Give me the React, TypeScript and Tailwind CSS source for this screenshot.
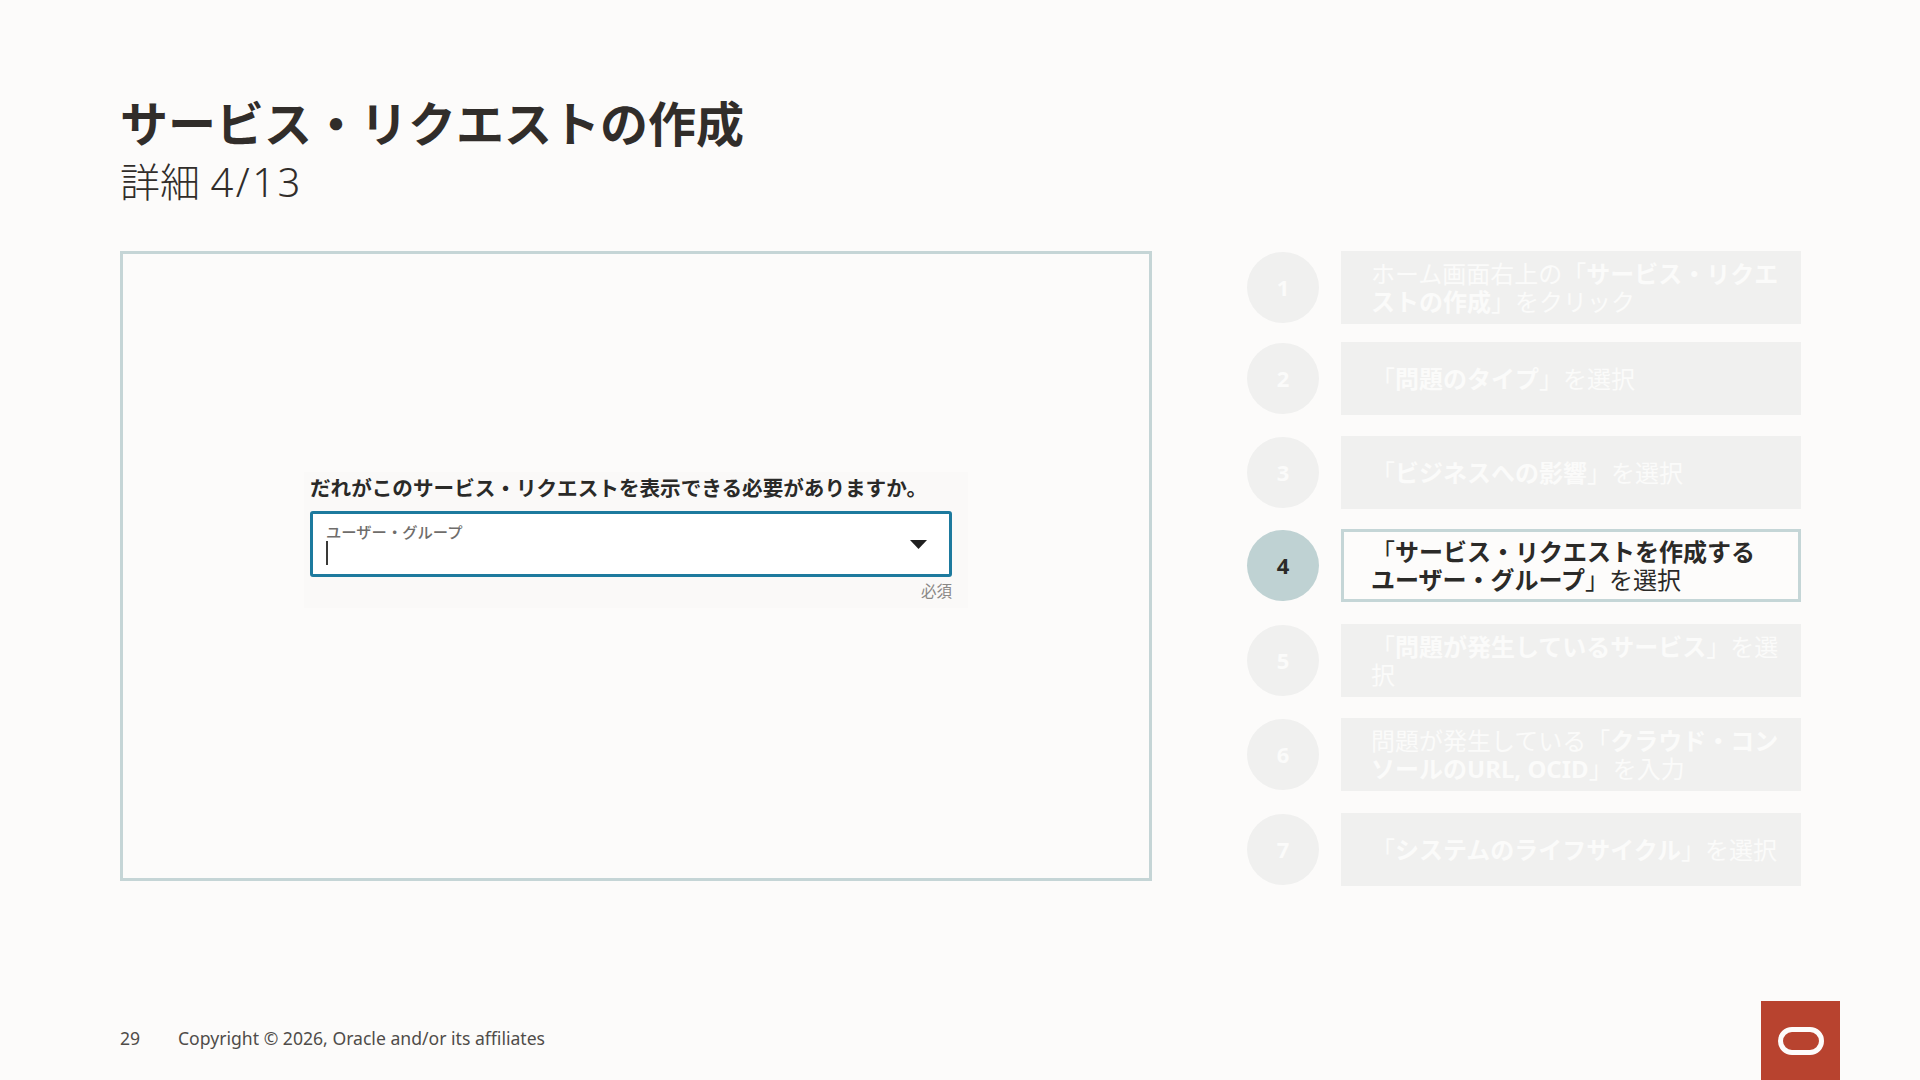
import React from "react";

type Step = { n: number; mt: string; lines: React.ReactNode[] };

const B = ({ children }: { children: React.ReactNode }) => <span className="font-bold">{children}</span>;

const steps: Step[] = [
  { n: 1, mt: "mt-0", lines: [<>ホーム画面右上の「<B>サービス・リクエ</B></>, <><B>ストの作成</B>」をクリック</>] },
  { n: 2, mt: "mt-[18px]", lines: [<>「<B>問題のタイプ</B>」を選択</>] },
  { n: 3, mt: "mt-[21px]", lines: [<>「<B>ビジネスへの影響</B>」を選択</>] },
  { n: 4, mt: "mt-[20px]", lines: [<>「<B>サービス・リクエストを作成する</B></>, <><B>ユーザー・グループ</B>」を選択</>] },
  { n: 5, mt: "mt-[22px]", lines: [<>「<B>問題が発生しているサービス</B>」を選</>, <>択</>] },
  { n: 6, mt: "mt-[21px]", lines: [<>問題が発生している「<B>クラウド・コン</B></>, <><B>ソールのURL, OCID</B>」を入力</>] },
  { n: 7, mt: "mt-[22px]", lines: [<>「<B>システムのライフサイクル</B>」を選択</>] },
];

function StepRow({ n, mt, lines }: Step) {
  const active = n === 4;
  return (
    <div className={`flex items-center gap-[22px] h-[73px] ${mt}`}>
      <div
        className={
          active
            ? "w-[72px] h-[71px] rounded-full bg-[#bfd2d3] flex items-center justify-center text-[22px] font-bold text-[#2b2a28]"
            : "w-[72px] h-[71px] rounded-full bg-[#f0f0ef] flex items-center justify-center text-[22px] font-bold text-[#fbfbfa]"
        }
      >
        {n}
      </div>
      <div
        className={
          active
            ? "w-[460px] h-[73px] border-[3px] border-[#c5d6d7] bg-[#fdfcfb] pl-[27px] flex flex-col justify-center text-[24px] leading-[28px] whitespace-nowrap text-[#2b2a28]"
            : "w-[460px] h-[73px] bg-[#f0f0ef] pl-[30px] flex flex-col justify-center text-[24px] leading-[28px] whitespace-nowrap text-[#fbfbfa]"
        }
      >
        {lines.map((l, i) => (
          <div key={i}>{l}</div>
        ))}
      </div>
    </div>
  );
}

export default function App() {
  return (
    <div className="w-[1920px] h-[1080px] overflow-hidden bg-[#fcfbfa] flex flex-col text-[#312d2a] font-['Noto_Sans','Noto_Sans_CJK_JP',sans-serif]">
      <div className="pl-[120px] pt-[92px] h-[251px] shrink-0">
        <h1 className="text-[48px] leading-[64px] font-bold">サービス・リクエストの作成</h1>
        <div className="text-[40px] leading-[52px] font-light">
          詳細 <span className="tracking-[2.5px]">4/13</span>
        </div>
      </div>

      <div className="pl-[120px] flex gap-[95px]">
        <div className="w-[1032px] h-[630px] border-[3px] border-[#c5d5d6] flex items-start justify-center">
          <div className="mt-[218px] w-[664px] h-[136px] bg-[#faf9f8] pl-[6px] pr-[16px] font-['Noto_Sans_CJK_JP',sans-serif]">
            <div className="text-[20.6px] leading-[30px] font-bold text-[#2a2a28] whitespace-nowrap">
              だれがこのサービス・リクエストを表示できる必要がありますか。
            </div>
            <div className="mt-[9px] h-[66px] bg-white border-[3px] border-[#1d7a9e] rounded-[3px] pl-[13px] pr-[22px] flex items-center justify-between">
              <div className="flex flex-col">
                <div className="text-[15.3px] leading-[20px] font-medium text-[#6f6d6b] mt-[-3px]">ユーザー・グループ</div>
                <div className="w-[1.5px] h-[24px] bg-[#3a3a38]" />
              </div>
              <svg width="17" height="9" viewBox="0 0 17 9">
                <path d="M0 0H17L8.5 9Z" fill="#1f1f1f" />
              </svg>
            </div>
            <div className="text-right text-[15.5px] leading-[22px] text-[#8a8886] mt-[2px]">必須</div>
          </div>
        </div>

        <div className="flex flex-col">
          {steps.map((s) => (
            <StepRow key={s.n} {...s} />
          ))}
        </div>
      </div>

      <div className="mt-auto flex items-end justify-between pl-[120px] pr-[80px]">
        <div className="flex text-[17.6px] leading-[24px] text-[#4f4c49] pb-[30px]">
          <span className="w-[58px]">29</span>
          <span>Copyright © 2026, Oracle and/or its affiliates</span>
        </div>
        <div className="w-[79px] h-[79px] bg-[#b8432f] flex items-center justify-center">
          <svg width="46" height="28" viewBox="0 0 46 28">
            <rect x="2.5" y="2.5" width="41" height="23" rx="11.5" fill="none" stroke="#fdfcfb" strokeWidth="5" />
          </svg>
        </div>
      </div>
    </div>
  );
}
